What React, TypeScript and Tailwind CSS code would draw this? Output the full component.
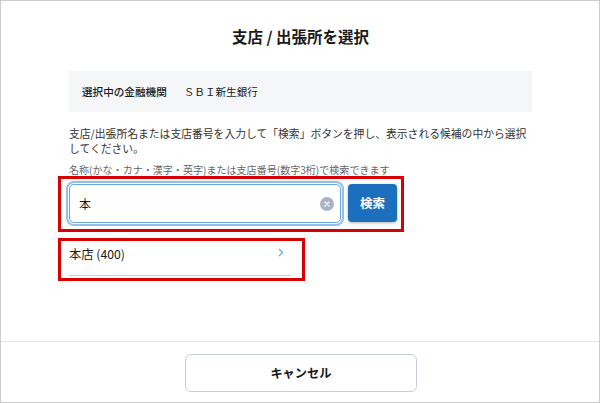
import React from 'react';

const App: React.FC = () => {
  return (
    <div className="relative w-[600px] h-[403px] bg-white border border-[#cccccc] flex flex-col overflow-hidden text-[#1a1a1a] font-['Noto_Sans_CJK_JP','Noto_Sans',sans-serif]">
      <div className="flex-1 pl-[68px] pr-[67px]">
        <h1 className="mt-[24px] h-[22px] leading-[22px] text-center text-[15.5px] font-bold">支店 / 出張所を選択</h1>
        <div className="mt-[24px] h-[41px] bg-[#f5f6f8] flex items-center pl-[13px] text-[10.6px]">
          <span className="font-medium">選択中の金融機関</span>
          <span className="ml-[17px]">ＳＢＩ新生銀行</span>
        </div>
        <p className="mt-[14px] text-[10.8px] leading-[15px] w-[462px] text-[#333333]">
          支店/出張所名または支店番号を入力して「検索」ボタンを押し、表示される候補の中から選択してください。
        </p>
        <p className="mt-[7px] text-[10.05px] leading-[14px] text-[#666666] whitespace-nowrap">
          名称(かな・カナ・漢字・英字)または支店番号(数字3桁)で検索できます
        </p>
        <div className="mt-[7px] flex items-start">
          <div className="w-[272px] h-[39px] rounded-[5px] border border-[#6aa5dd] flex items-center pl-[9px] pr-[6px] shadow-[0_0_0_1px_#ffffff,0_0_0_3px_#93bfe9]">
            <span className="flex-1 text-[12px]">本</span>
            <span className="w-[14px] h-[14px] rounded-full bg-[#a9b4c6] flex items-center justify-center">
              <svg width="8" height="8" viewBox="0 0 8 8">
                <path d="M2 2l4 4M6 2l-4 4" stroke="#ffffff" strokeWidth="1.3" strokeLinecap="round" />
              </svg>
            </span>
          </div>
          <button className="ml-[7px] w-[49px] h-[38px] rounded-[4px] bg-[#1c6fbc] text-white text-[12.5px] font-bold shadow-[0_1px_3px_rgba(0,0,0,0.3)]">検索</button>
        </div>
        <div className="mt-[18px] w-[222px] h-[35px] border-b border-[#c4cedd] flex items-start justify-between pr-[7px]">
          <span className="mt-[4px] text-[12.25px] leading-[18px]">本店 (400)</span>
          <svg className="mt-[7px]" width="6" height="9" viewBox="0 0 6 9" fill="none">
            <path d="M1 1l3.5 3.5L1 8" stroke="#6aaede" strokeWidth="1.4" />
          </svg>
        </div>
      </div>
      <div className="h-[61px] border-t border-[#dfe3ea] flex justify-center pl-[2px] pt-[12px]">
        <button className="w-[232px] h-[38px] rounded-[6px] border border-[#c5cddd] bg-white text-[12.25px] font-bold pt-[1px]">キャンセル</button>
      </div>
      <div className="absolute left-[57px] top-[175px] w-[346px] h-[56px] border-[3px] border-[#d80000]" />
      <div className="absolute left-[57px] top-[237px] w-[247px] h-[43px] border-[3px] border-[#d80000]" />
    </div>
  );
};

export default App;
